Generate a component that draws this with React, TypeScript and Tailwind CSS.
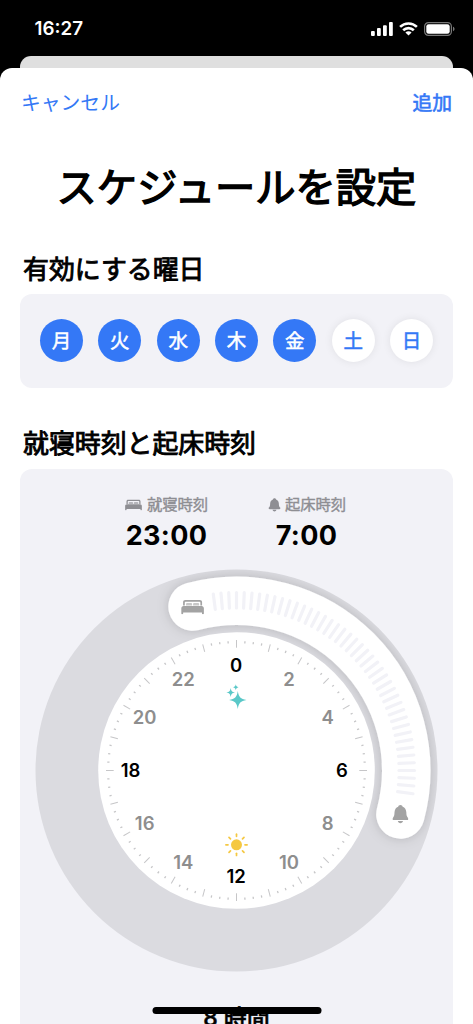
import React, { useState } from 'react';

interface IconProps {
  x?: number;
  y?: number;
  width: number;
  height: number;
  className?: string;
}

const BedIcon: React.FC<IconProps> = (props) => (
  <svg viewBox="0 0 23 15" fill="currentColor" {...props}>
    <path d="M2 6V2.600C2 1.200 2.900.4 4.300.4h14.400c1.400 0 2.300.8 2.300 2.200V6h-1.700V2.900c0-.5-.3-.8-.8-.8H4.500c-.5 0-.8.3-.8.8V6z" />
    <path d="M5 6V4.500c0-.8.4-1.200 1.200-1.200h3.600c.8 0 1.200.4 1.200 1.200V6zM12 6V4.500c0-.8.4-1.200 1.200-1.200h3.600c.8 0 1.200.4 1.200 1.200V6z" opacity=".6" />
    <path d="M2.600 6.500h17.800c1.500 0 2.400 1 2.400 2.500v5c0 .4-.3.700-.7.700h-.5c-.4 0-.7-.3-.7-.7v-1.200H2.100V14c0 .4-.3.700-.7.700H.9c-.4 0-.7-.3-.7-.7V9c0-1.500.9-2.500 2.400-2.500z" />
  </svg>
);

const BellIcon: React.FC<IconProps> = (props) => (
  <svg viewBox="0 0 16 19" fill="currentColor" {...props}>
    <path d="M8 .2c1.200 0 2.100.8 2.200 1.700 2.300.9 3.600 2.900 3.700 5.500.1 3.200.4 4.200 1.700 5.600.8.9.4 2.200-.9 2.200H1.300c-1.300 0-1.700-1.300-.9-2.200C1.700 11.600 2 10.600 2.100 7.400 2.200 4.800 3.500 2.800 5.800 1.900 5.900 1 6.800.2 8 .2zM5.400 16.100h5.200c-.3 1.400-1.300 2.200-2.600 2.200s-2.300-.8-2.600-2.200z" />
  </svg>
);

const StatusBar = () => (
  <div className="flex h-[55.500px] shrink-0 items-start justify-between pt-[17px] pr-[18px] pl-[34.500px]">
    <span className="text-[18.800px] leading-6 font-semibold text-white">16:27</span>
    <div className="mt-[5px] flex items-center gap-[6px] text-white">
      <svg width="22" height="14" viewBox="0 0 22 14" fill="currentColor">
        <rect x="0" y="9" width="3.800" height="5" rx="1" />
        <rect x="6" y="6" width="3.800" height="8" rx="1" />
        <rect x="12" y="3.200" width="3.800" height="10.800" rx="1" />
        <rect x="18" y="0" width="3.800" height="14" rx="1" />
      </svg>
      <svg width="19" height="14" viewBox="0 0 19 14" fill="none" stroke="currentColor" strokeWidth="2.600">
        <path d="M1.100 4.900a12 12 0 0 1 16.800 0" />
        <path d="M4.200 8.300a7.600 7.600 0 0 1 10.600 0" />
        <path d="M9.500 13.600 6.400 10.600a4.400 4.400 0 0 1 6.200 0z" fill="currentColor" stroke="none" />
      </svg>
      <svg width="31" height="14" viewBox="0 0 31 14">
        <rect x=".6" y=".6" width="26.800" height="12.800" rx="3.800" fill="none" stroke="#777" strokeWidth="1.200" />
        <rect x="2.300" y="2.300" width="23.400" height="9.400" rx="2.300" fill="#fff" />
        <path d="M29 4.800c1 .4 1.500 1.200 1.500 2.200S30 8.800 29 9.200z" fill="#777" />
      </svg>
    </div>
  </div>
);

const days = ['月', '火', '水', '木', '金', '土', '日'];

const DayPicker = () => {
  const [active, setActive] = useState(['月', '火', '水', '木', '金']);

  const toggle = (day: string) => {
    setActive(prev => (prev.includes(day) ? prev.filter(d => d !== day) : [...prev, day]));
  };

  return (
    <div className="mx-5 flex h-[93.500px] items-center justify-between rounded-xl bg-[#f2f2f7] px-5">
      {days.map(day => (
        <button
          key={day}
          onClick={() => toggle(day)}
          className={`flex h-[43px] w-[43px] items-center justify-center rounded-full pt-[2px] text-[19.500px] leading-none [-webkit-text-stroke:0.5px] ${
            active.includes(day)
              ? 'bg-[#3478f6] text-white'
              : 'bg-white text-[#3478f6] shadow-[0_0_8px_rgba(0,0,0,0.08)]'
          }`}
        >
          {day}
        </button>
      ))}
    </div>
  );
};

// Position on the dial, 0 degrees at the top, clockwise
const polar = (deg: number, r: number) => {
  const rad = (deg * Math.PI) / 180;
  return { x: r * Math.sin(rad), y: -r * Math.cos(rad) };
};

const START = -15;
const END = 105;

const Dial = () => {
  const from = polar(START, 169.700);
  const to = polar(END, 169.700);
  const hours = Array.from({ length: 12 }, (_, i) => i * 2);
  const minutes = Array.from({ length: 96 }, (_, i) => i);
  const grips = Array.from({ length: 43 }, (_, i) => -7.500 + i * 2.500);

  return (
    <svg width="403" height="403" viewBox="-201.5 -201.5 403 403">
      <defs>
        <clipPath id="ring">
          <circle r="201" />
        </clipPath>
        <filter id="glow" x="-30%" y="-30%" width="160%" height="160%">
          <feDropShadow dx="0" dy="0" stdDeviation="6" floodColor="#000" floodOpacity=".17" />
        </filter>
      </defs>
      <circle r="201" fill="#dbdbe0" />
      <g clipPath="url(#ring)">
        <path
          d={`M${from.x} ${from.y}A169.700 169.700 0 0 1 ${to.x} ${to.y}`}
          fill="none"
          stroke="#fff"
          strokeWidth="48.500"
          strokeLinecap="round"
          filter="url(#glow)"
        />
      </g>
      {grips.map(deg => (
        <line
          key={deg}
          y1="-178"
          y2="-162.500"
          stroke="#f2f2f7"
          strokeWidth="3.200"
          strokeLinecap="round"
          transform={`rotate(${deg})`}
        />
      ))}
      <circle r="138.300" fill="#fff" />
      {minutes.map(i => (
        <line
          key={i}
          y1={i % 4 === 0 ? -130.500 : -129.500}
          y2={i % 4 === 0 ? -122.800 : -127.300}
          stroke="#c6c6c8"
          strokeWidth={i % 4 === 0 ? 1 : 1.300}
          transform={`rotate(${i * 3.750})`}
        />
      ))}
      {hours.map(h => {
        const p = polar(h * 15, 105.700);
        return (
          <text
            key={h}
            x={p.x - 0.3}
            y={p.y + 6.700}
            textAnchor="middle"
            className={`text-[18.5px] font-semibold ${h % 6 === 0 ? 'fill-black' : 'fill-[#8e8e8e]'}`}
          >
            {h}
          </text>
        );
      })}

      {/* Night */}
      <g fill="#5ac8c8">
        <path d="M1.300-79.500C2.400-73.200 4-71.600 10-70.500 4-69.400 2.400-67.800 1.300-61.500.200-67.800-1.400-69.400-7.400-70.500-1.400-71.600.200-73.200 1.300-79.500z" />
        <path d="M-5.800-82.500c.6 3.100 1.400 3.900 4.300 4.500-2.900.6-3.700 1.400-4.300 4.500-.6-3.100-1.400-3.900-4.300-4.500 2.900-.6 3.700-1.400 4.300-4.500z" />
        <path d="M-.700-86.300c.4 2 .9 2.500 2.700 3-1.800.5-2.300 1-2.700 3-.4-2-.9-2.500-2.700-3 1.800-.5 2.300-1 2.700-3z" />
      </g>

      {/* Noon */}
      <g transform="translate(0 74.300)">
        <circle r="5.500" fill="#f5c842" />
        {[0, 45, 90, 135, 180, 225, 270, 315].map(deg => (
          <line
            key={deg}
            y1="-10.600"
            y2="-8.500"
            stroke="#f5c842"
            strokeWidth="1.700"
            strokeLinecap="round"
            transform={`rotate(${deg})`}
          />
        ))}
      </g>

      <BedIcon x={from.x - 11.500} y={from.y - 7} width={23} height={15} className="text-[#a3a3a3]" />
      <BellIcon x={to.x - 8} y={to.y - 9.500} width={16} height={19} className="text-[#a3a3a3]" />
    </svg>
  );
};

const App = () => {
  return (
    <div className="relative flex h-screen flex-col overflow-hidden bg-black font-['Inter','Noto_Sans_CJK_JP',sans-serif] text-black">
      <StatusBar />
      <div className="mx-5 h-[12.500px] shrink-0 rounded-t-[11px] bg-[#dfdfdf]" />

      <main className="flex flex-1 flex-col overflow-hidden rounded-t-[12px] bg-white">
        <div className="flex h-[71px] shrink-0 items-center justify-between px-[21px] text-[19.800px] text-[#3478f6]">
          <button>キャンセル</button>
          <button className="[-webkit-text-stroke:0.6px]">追加</button>
        </div>

        <h1 className="mt-[19px] text-center text-[40.300px] leading-[60px] font-normal [-webkit-text-stroke:1.4px]">スケジュールを設定</h1>

        <h2 className="mt-[33px] pl-[23px] text-[25.900px] leading-[38px] font-normal [-webkit-text-stroke:0.9px]">有効にする曜日</h2>
        <div className="mt-[5px]">
          <DayPicker />
        </div>

        <h2 className="mt-[37px] pl-[23px] text-[25.900px] leading-[38px] font-normal [-webkit-text-stroke:0.9px]">就寝時刻と起床時刻</h2>
        <section className="mx-5 mt-[6px] flex h-[700px] shrink-0 flex-col items-center rounded-t-xl bg-[#f2f2f7]">
          <div className="mt-[25.500px] flex justify-center gap-[59px]">
            <div className="flex w-[81px] flex-col items-center">
              <div className="flex items-center gap-[5px] text-[15.300px] leading-[22px] whitespace-nowrap text-[#8e8e93] [-webkit-text-stroke:0.4px]">
                <BedIcon width={17} height={12} />
                <span>就寝時刻</span>
              </div>
              <span className="mt-[2px] text-[27px] leading-9 font-bold tracking-[0.3px]">23:00</span>
            </div>
            <div className="flex w-[81px] flex-col items-center">
              <div className="flex items-center gap-1 pl-px text-[15.300px] leading-[22px] whitespace-nowrap text-[#8e8e93] [-webkit-text-stroke:0.4px]">
                <BellIcon width={13} height={14} />
                <span>起床時刻</span>
              </div>
              <span className="mt-[2px] text-[27px] leading-9 font-bold tracking-[0.3px]">7:00</span>
            </div>
          </div>
          <div className="mt-[15px]">
            <Dial />
          </div>
          <p className="mt-[28px] text-[23px] leading-9 font-medium [-webkit-text-stroke:0.5px]">8 時間</p>
        </section>
      </main>

      {/* Home indicator */}
      <div className="absolute bottom-[10.500px] left-1/2 h-[6.500px] w-[169px] -translate-x-1/2 rounded-full bg-black" />
    </div>
  );
};

export default App;
